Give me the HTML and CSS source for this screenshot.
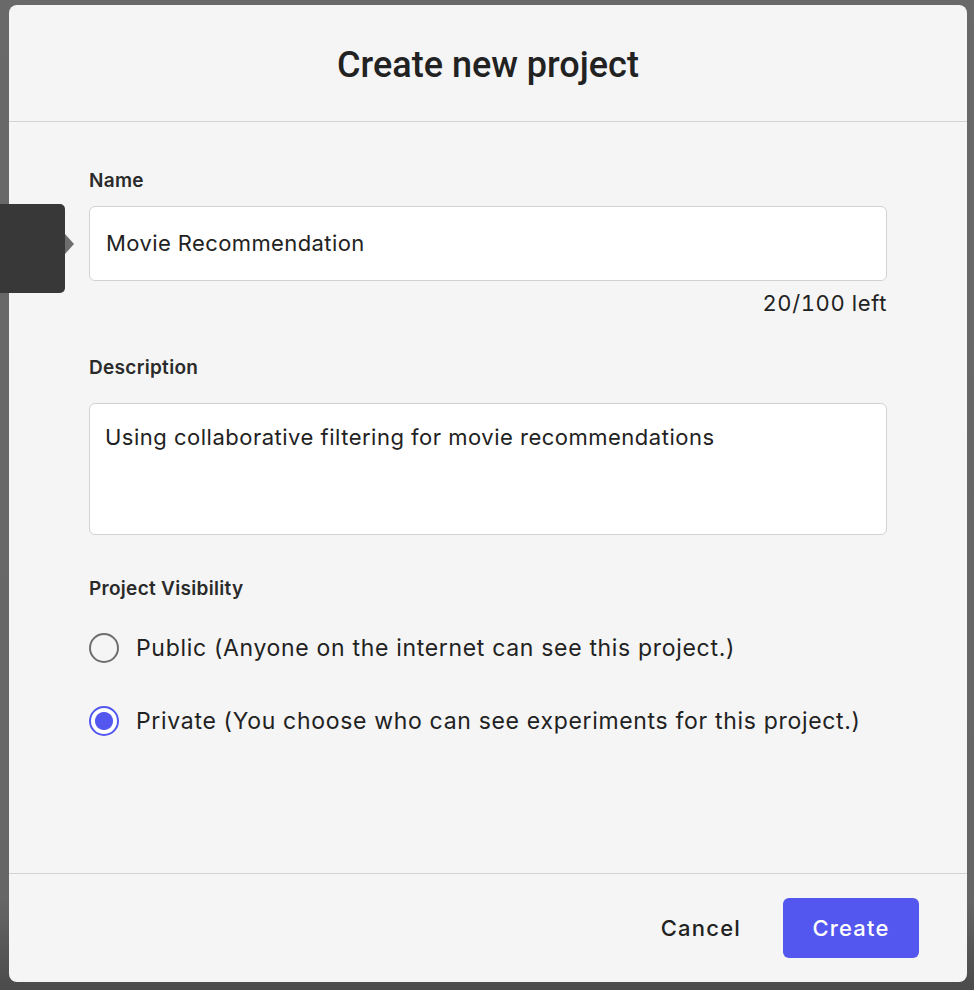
FILE: index.html
```html
<!DOCTYPE html>
<html>
<head>
<meta charset="utf-8">
<link rel="stylesheet" href="styles.css">
</head>
<body>
<div class="backdrop">
  <div class="modal">
    <div class="modal-header">
      <h1 class="title">Create new project</h1>
    </div>
    <div class="modal-body">
      <div class="field">
        <label class="label">Name</label>
        <div class="input">Movie Recommendation</div>
        <div class="counter">20/100 left</div>
      </div>
      <div class="field field-desc">
        <label class="label">Description</label>
        <div class="textarea">Using collaborative filtering for movie recommendations</div>
      </div>
      <div class="field field-vis">
        <label class="label">Project Visibility</label>
        <div class="radio-row">
          <span class="radio"></span>
          <span class="radio-text">Public (Anyone on the internet can see this project.)</span>
        </div>
        <div class="radio-row">
          <span class="radio checked"></span>
          <span class="radio-text">Private (You choose who can see experiments for this project.)</span>
        </div>
      </div>
    </div>
    <div class="modal-footer">
      <button class="btn btn-cancel">Cancel</button>
      <button class="btn btn-create">Create</button>
    </div>
  </div>
  <div class="tooltip"><span class="tooltip-arrow"></span></div>
</div>
</body>
</html>
```
FILE: styles.css
```css
* { box-sizing: border-box; }
html, body { margin: 0; padding: 0; }
body {
  font-family: Inter, Roboto, "Liberation Sans", sans-serif;
  color: #222;
  background: #4e4e4e;
}
.backdrop {
  position: relative;
  width: 974px;
  height: 990px;
  background: linear-gradient(#696969, #666 900px, #4c4c4c 985px);
  padding: 5px 7px 8px 9px;
}
.modal {
  width: 958px;
  height: 977px;
  background: #f5f5f5;
  border-radius: 8px;
  display: flex;
  flex-direction: column;
}
.modal-header {
  height: 117px;
  border-bottom: 1px solid #d4d4d4;
  display: flex;
  align-items: center;
  justify-content: center;
}
.title {
  margin: 0;
  font-family: Roboto, "Liberation Sans", sans-serif;
  font-size: 36px;
  font-weight: 500;
  color: #222;
  padding-top: 3px;
}
.modal-body {
  flex: 1;
  padding: 48px 80px 0 80px;
}
.label {
  display: block;
  font-size: 19px;
  font-weight: 600;
  color: #2a2a2a;
  line-height: 22px;
  letter-spacing: 0.3px;
}
.input {
  margin-top: 14px;
  height: 75px;
  background: #fff;
  border: 1px solid #d2d2d2;
  border-radius: 6px;
  font-size: 22px;
  line-height: 72px;
  padding-left: 16px;
  letter-spacing: 0.4px;
  color: #222;
}
.counter {
  text-align: right;
  font-size: 22px;
  line-height: 26px;
  margin-top: 9px;
  letter-spacing: 0.6px;
  font-variant-numeric: tabular-nums;
  font-feature-settings: "tnum";
  color: #222;
}
.field-desc { margin-top: 41px; }
.textarea {
  margin-top: 24px;
  height: 132px;
  background: #fff;
  border: 1px solid #d2d2d2;
  border-radius: 6px;
  font-size: 22px;
  line-height: 26px;
  padding: 20px 15px;
  letter-spacing: 0.5px;
  color: #222;
}
.field-vis { margin-top: 43px; }
.radio-row {
  display: flex;
  align-items: center;
  height: 39px;
}
.radio-row:first-of-type { margin-top: 28px; }
.radio-row + .radio-row { margin-top: 34px; }
.radio {
  width: 30px;
  height: 30px;
  border-radius: 50%;
  border: 2.5px solid #6e6e6e;
  background: transparent;
  flex: none;
}
.radio.checked {
  border-color: #5457ef;
  background: radial-gradient(circle, #5457ef 0 8.5px, #fff 9.5px);
}
.radio-text {
  margin-left: 17px;
  font-size: 23px;
  letter-spacing: 0.68px;
  color: #222;
}
.modal-footer {
  height: 109px;
  border-top: 1px solid #d4d4d4;
  display: flex;
  align-items: center;
  justify-content: flex-end;
  padding-right: 48px;
  gap: 42px;
}
.btn {
  font-family: Inter, Roboto, "Liberation Sans", sans-serif;
  font-size: 22px;
  font-weight: 500;
  border: none;
  cursor: pointer;
  letter-spacing: 1.2px;
}
.btn-cancel {
  background: transparent;
  color: #222;
  padding: 0;
}
.btn-create {
  background: #5457ef;
  color: #fff;
  width: 136px;
  height: 60px;
  border-radius: 6px;
  margin-top: 0;
  padding-bottom: 2px;
}
.tooltip {
  position: absolute;
  left: 0;
  top: 204px;
  width: 65px;
  height: 89px;
  background: #383838;
  border-radius: 0 5px 5px 0;
}
.tooltip-arrow {
  position: absolute;
  right: -9px;
  top: 30px;
  width: 0;
  height: 0;
  border-top: 10px solid transparent;
  border-bottom: 10px solid transparent;
  border-left: 9px solid #6d6d6d;
}
```
